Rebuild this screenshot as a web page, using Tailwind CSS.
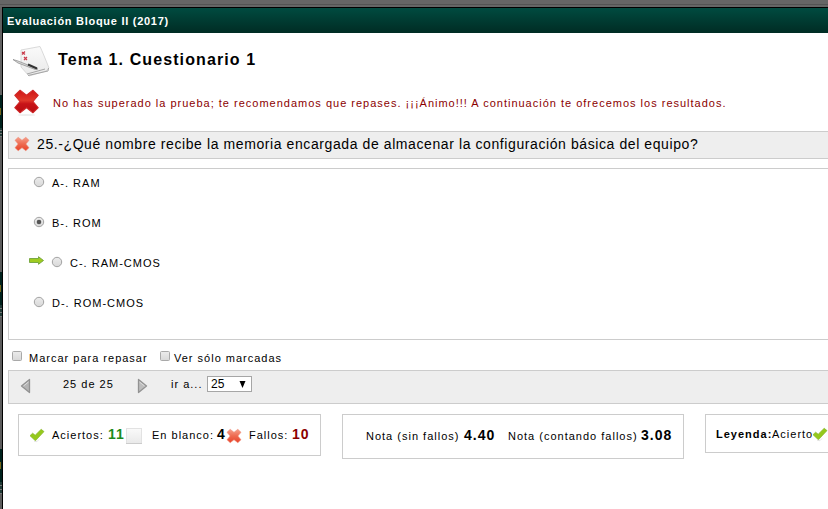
<!DOCTYPE html>
<html lang="es">
<head>
<meta charset="utf-8">
<title>Evaluación Bloque II (2017)</title>
<script src="https://cdn.jsdelivr.net/npm/@tailwindcss/browser@4"></script>
</head>
<body class="w-[828px] h-[509px] overflow-hidden bg-[#666] text-black text-[11px] leading-[14px] tracking-[1px] whitespace-nowrap font-['Liberation_Sans',Arial,sans-serif]">
<svg class="absolute w-0 h-0">
  <defs>
    <linearGradient id="red" x2="0" y2="1"><stop stop-color="#f5a08c"/><stop offset=".5" stop-color="#ee6a50"/><stop offset="1" stop-color="#e8432a"/></linearGradient>
    <linearGradient id="deep" x2="0" y2="1"><stop stop-color="#cf1515"/><stop offset=".45" stop-color="#e0382a"/><stop offset=".6" stop-color="#c81418"/><stop offset="1" stop-color="#b80d12"/></linearGradient>
    <linearGradient id="ctl" x2="0" y2="1"><stop stop-color="#ececec"/><stop offset="1" stop-color="#d8d8d8"/></linearGradient>
    <linearGradient id="paper" x2="0" y2="1"><stop stop-color="#fafafa"/><stop offset="1" stop-color="#e9e9e9"/></linearGradient>
    <symbol id="x" viewBox="0 0 16 16"><path d="M4.200 1.300 8 4.300 11.800 1.300 15 4.300 11.900 8 15 11.700 11.800 14.700 8 11.700 4.200 14.700 1 11.700 4.100 8 1 4.300z" stroke-linejoin="round" stroke-width=".6"/></symbol>
    <symbol id="check" viewBox="0 0 16 16"><path d="M1 8.700 3.600 6.200 6.200 8.200 12.200 2.300 15 4.600 6.400 13.800z" fill="#95c91c" stroke="#86b52b" stroke-width=".7" stroke-linejoin="round"/><path d="m5 14.300 3 .4 2-2.200" fill="none" stroke="#ddd" stroke-width=".7"/></symbol>
    <symbol id="radio" viewBox="0 0 12 12"><circle cx="6" cy="6" r="4.700" fill="url(#ctl)" stroke="#a3a3a3"/></symbol>
    <symbol id="box" viewBox="0 0 12 12"><rect x="1.500" y="1.500" width="9" height="9" rx="1" fill="url(#ctl)" stroke="#a9a9a9"/></symbol>
  </defs>
</svg>
<div class="flex flex-col h-[509px]">
  <div class="h-[7px] shrink-0 bg-[#666] pt-1"><div class="h-px bg-[#545454]"></div></div>
  <div class="flex flex-1">
    <div class="w-[2px] shrink-0 bg-[#5c5c5c] flex flex-col">
      <div class="h-[88px] bg-[#626262]"></div>
      <div class="h-[33px] bg-[#00221d] pt-[13px]"><div class="h-[7px] w-px bg-[#75661c]"></div></div>
      <div class="h-[9px] bg-[repeating-linear-gradient(#203b37_0_2px,#777_2px_3px)]"></div>
      <div class="h-[135px]"></div>
      <div class="h-[33px] bg-[#00221d] pt-[13px]"><div class="h-[7px] w-px bg-[#75661c]"></div></div>
      <div class="h-[12px] bg-[repeating-linear-gradient(#203b37_0_3px,#777_3px_4px)]"></div>
      <div class="h-[132px]"></div>
      <div class="h-[33px] bg-[#00221d] pt-[13px]"><div class="h-[7px] w-px bg-[#75661c]"></div></div>
      <div class="h-[12px] bg-[repeating-linear-gradient(#203b37_0_3px,#777_3px_4px)]"></div>
    </div>
    <main class="w-[826px] bg-white border-l border-t border-black flex flex-col">
      <header class="h-[25px] shrink-0 pl-1 pt-[6px] bg-linear-to-b from-[#004b40] to-[#002c24] text-white font-bold tracking-[.72px]">Evaluación Bloque II (2017)</header>
      <div class="h-[49px] shrink-0 flex">
        <svg class="w-10 h-8 ml-[8px] mt-[12px]" viewBox="0 0 40 32">
          <path d="m10 5 19-3.500Q32 8 38 23l-3 3-17 5-8-9z" fill="url(#paper)" stroke="#d1d1d1" stroke-width=".8"/>
          <path d="m17 30.500 20-4.500.5-3M16 29l18-5" fill="none" stroke="#a5a5a5"/>
          <path d="m11 7 3 2.500m0-3L11 9.500M13 12l3 3m0-3-3 3" stroke="#c93b4b" stroke-width="1.200"/>
          <path d="M2 14.500 7 16l20 8-3 .4L7 18z" fill="#d8d8d8" stroke="#888" stroke-width=".7"/>
          <path d="m17 19.500 9 4" stroke="#333" stroke-width="2"/>
        </svg>
        <h1 class="ml-[7px] mt-[17px] text-[16px] leading-5 font-bold tracking-[1.1px]">Tema 1. Cuestionario 1</h1>
      </div>
      <div class="h-[49px] shrink-0 flex text-[#8b0000]">
        <svg class="w-[27px] h-[29px] ml-[10px] mt-[6px]" viewBox="0 0 27 29" fill="url(#deep)" stroke="#d02929"><ellipse cx="13.500" cy="27" rx="9" ry="1" fill="#eee" stroke="none"/><use href="#x" x="0" y="0" width="27" height="27"/></svg>
        <p class="ml-[13px] mt-[14px]">No has superado la prueba; te recomendamos que repases. ¡¡¡Ánimo!!! A continuación te ofrecemos los resultados.</p>
      </div>
      <div class="ml-[5px] h-[28px] shrink-0 border border-r-0 border-[#ccc] bg-[#eee] flex">
        <svg class="w-4 h-4 ml-[5px] mt-[4px]" fill="url(#red)" stroke="#f08b76"><use href="#x"/></svg>
        <h2 class="ml-[7px] mt-[3px] text-[14px] leading-[18px] tracking-[.59px]">25.-¿Qué nombre recibe la memoria encargada de almacenar la configuración básica del equipo?</h2>
      </div>
      <div class="ml-[5px] mt-[9px] h-[172px] shrink-0 border border-r-0 border-[#ccc] pl-[24px] pt-[7px]">
        <div class="h-10 flex"><svg class="w-3 h-3"><use href="#radio"/></svg><span class="ml-[7px]">A-. RAM</span></div>
        <div class="h-10 flex"><svg class="w-3 h-3"><use href="#radio"/><circle cx="6" cy="6" r="2.300" fill="#555"/></svg><span class="ml-[7px]">B-. ROM</span></div>
        <div class="h-10 flex -ml-[4px]"><svg class="w-[15px] h-[9px]" viewBox="0 0 15 9"><path d="M.5 2.500h9V.7l5 3.800-5 3.800V6.500h-9z" fill="#9fcb20" stroke="#71a33b" stroke-width=".9"/></svg><svg class="w-3 h-3 ml-[7px]"><use href="#radio"/></svg><span class="ml-[7px]">C-. RAM-CMOS</span></div>
        <div class="h-10 flex"><svg class="w-3 h-3"><use href="#radio"/></svg><span class="ml-[7px]">D-. ROM-CMOS</span></div>
      </div>
      <div class="h-[30px] shrink-0 flex pt-[10px] pl-2">
        <svg class="w-3 h-3"><use href="#box"/></svg><span class="ml-[6px] mt-px w-[130px]">Marcar para repasar</span>
        <svg class="w-3 h-3"><use href="#box"/></svg><span class="ml-[3px] mt-px">Ver sólo marcadas</span>
      </div>
      <div class="ml-[5px] h-[34px] shrink-0 border border-r-0 border-[#ccc] bg-[#eee] flex pt-[6px]">
        <svg class="w-[11px] h-[16px] ml-[11px] mt-px" viewBox="0 0 11 16"><path d="M9.500 1.500v13L1.500 8z" fill="#b5b5b5" stroke="#929292" stroke-width="1.300" stroke-linejoin="round"/><path d="M8.500 4 3.500 8" stroke="#ddd"/></svg>
        <span class="ml-[32px] w-[74px]">25 de 25</span>
        <svg class="w-[11px] h-[16px] mt-px" viewBox="0 0 11 16"><path d="M1.500 1.500v13l8-6.500z" fill="#bdbdbd" stroke="#929292" stroke-width="1.300" stroke-linejoin="round"/><path d="m2.500 4 5 4" stroke="#ddd"/></svg>
        <span class="ml-[23px] w-[36px]">ir a...</span>
        <div class="w-[45px] h-[16px] -mt-px border border-[#a6a6a6] bg-white flex justify-between pl-[3px] pr-[5px] tracking-normal text-[12px]"><span>25</span><svg class="w-[7px] h-[7px] mt-[4px]"><path d="M.5 0h6L3.500 7z"/></svg></div>
      </div>
      <div class="flex items-start pt-[10px] pl-[15px]">
        <div class="w-[303px] h-[42px] shrink-0 border border-[#ccc] flex pt-[12px] pl-[10px]">
          <svg class="w-4 h-4"><use href="#check"/></svg><span class="ml-[7px] mt-px w-[56px]">Aciertos:</span><b class="text-[14px] leading-[15px] w-[18px] text-[#1c8a1c]">11</b>
          <svg class="w-4 h-4 mt-px"><rect x=".5" y=".5" width="15" height="15" fill="url(#paper)" stroke="#e2e2e2"/><path d="M0 15.500h16" stroke="#ccc"/></svg><span class="ml-[10px] mt-px w-[65px]">En blanco:</span><b class="text-[14px] leading-[15px] w-[9px]">4</b>
          <svg class="w-4 h-4 mt-px" fill="url(#red)" stroke="#f08b76"><use href="#x"/></svg><span class="ml-[7px] mt-px w-[43px]">Fallos:</span><b class="text-[14px] leading-[15px] text-[#8b0000]">10</b>
        </div>
        <div class="ml-[21px] w-[342px] h-[45px] shrink-0 border border-[#ccc] flex pt-[13px] pl-[23px]">
          <span class="mt-px w-[98px]">Nota (sin fallos)</span><b class="text-[14px] leading-[15px] w-[44px]">4.40</b>
          <span class="mt-px w-[133px]">Nota (contando fallos)</span><b class="text-[14px] leading-[15px]">3.08</b>
        </div>
        <div class="ml-[21px] flex-1 min-w-0 overflow-hidden h-[39px] border border-r-0 border-[#ccc] flex pt-[12px] pl-[10px]">
          <b class="w-[56px] shrink-0">Leyenda:</b><span class="w-[40px] shrink-0">Acierto</span><svg class="w-4 h-4 shrink-0 -mt-px"><use href="#check"/></svg>
        </div>
      </div>
    </main>
  </div>
</div>
</body>
</html>
